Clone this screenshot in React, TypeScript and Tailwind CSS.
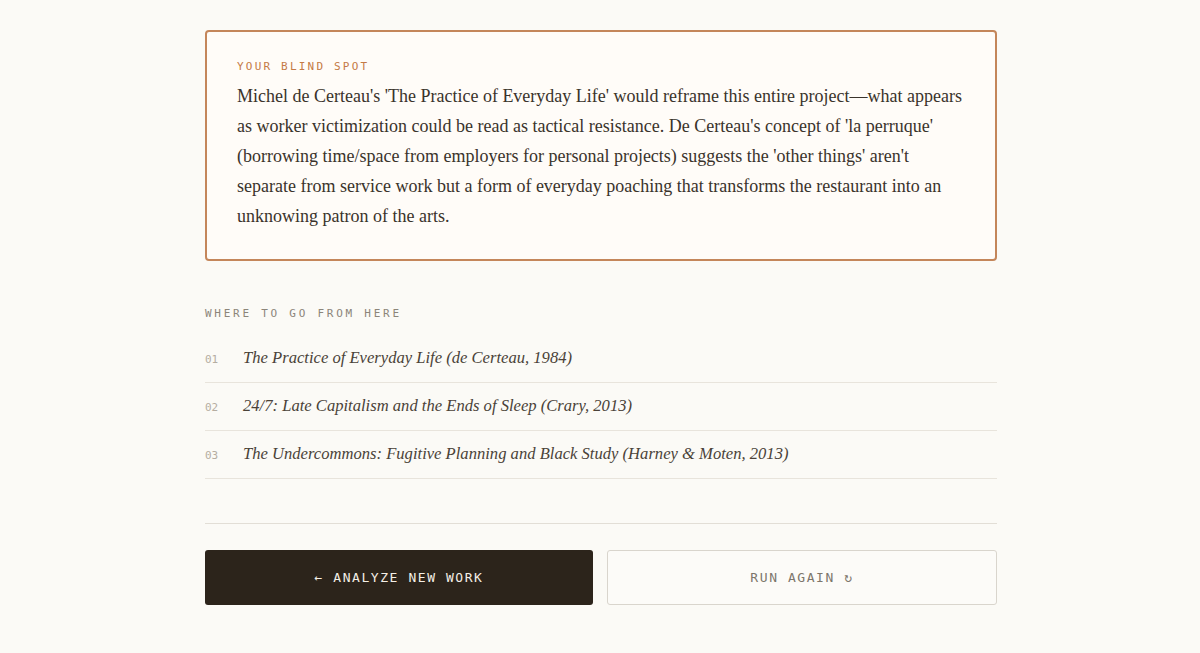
import React from "react";

const readings = [
  { n: "01", title: "The Practice of Everyday Life (de Certeau, 1984)" },
  { n: "02", title: "24/7: Late Capitalism and the Ends of Sleep (Crary, 2013)" },
  { n: "03", title: "The Undercommons: Fugitive Planning and Black Study (Harney & Moten, 2013)" },
];

const mono = "font-['DejaVu_Sans_Mono',monospace]";
const serif = "font-['Liberation_Serif',serif]";

export default function App() {
  return (
    <div className="min-h-screen bg-[#fbfaf6] flex justify-center pl-[2px]">
      <div className="w-[792px] pt-[30px]">
        {/* blind spot card */}
        <div className="rounded-[4px] border-2 border-[#c4865a] bg-[#fffcf8] px-[30px] pt-[27px] pb-[28px]">
          <div className={`${mono} text-[11px] tracking-[0.2em] text-[#c47a46] uppercase`}>Your blind spot</div>
          <p className={`${serif} mt-[5px] text-[18px] leading-[30px] text-[#3a332b]`}>
            Michel de Certeau's 'The Practice of Everyday Life' would reframe this entire project—what appears as worker
            victimization could be read as tactical resistance. De Certeau's concept of 'la perruque' (borrowing
            time/space from employers for personal projects) suggests the 'other things' aren't separate from service
            work but a form of everyday poaching that transforms the restaurant into an unknowing patron of the arts.
          </p>
        </div>

        {/* further reading */}
        <div className="mt-[45px]">
          <div className={`${mono} text-[11px] tracking-[0.25em] text-[#8c857a] uppercase`}>Where to go from here</div>
          <ul className="mt-[13px]">
            {readings.map((r) => (
              <li key={r.n} className="flex items-center h-[48px] border-b border-[#e8e4dc]">
                <span className={`${mono} text-[11px] leading-none pt-[1px] text-[#b5ada1] w-[38px]`}>{r.n}</span>
                <span className={`${serif} italic text-[16.6px] text-[#4a4238]`}>{r.title}</span>
              </li>
            ))}
          </ul>
        </div>

        <div className="mt-[44px] border-t border-[#e2ded6]" />

        {/* actions */}
        <div className="mt-[26px] flex gap-[14px]">
          <button
            className={`${mono} flex-1 h-[55px] rounded-[3px] bg-[#2c241b] text-[#f4efe6] text-[13px] tracking-[0.12em]`}
          >
            ← ANALYZE NEW WORK
          </button>
          <button
            className={`${mono} flex-1 h-[55px] rounded-[3px] border border-[#d9d5cd] bg-[#fcfbf8] text-[#7d766b] text-[13px] tracking-[0.12em]`}
          >
            RUN AGAIN ↻
          </button>
        </div>
      </div>
    </div>
  );
}
